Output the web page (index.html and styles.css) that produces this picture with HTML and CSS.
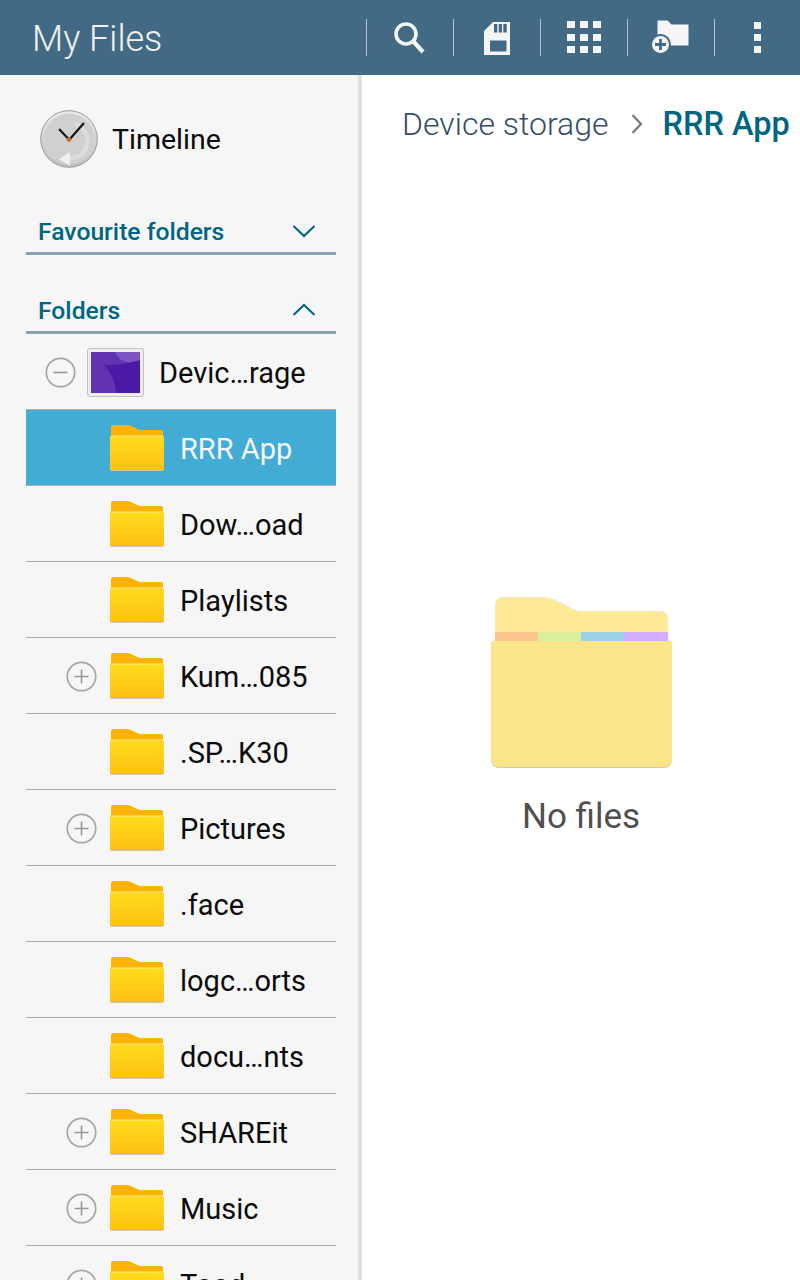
FILE: index.html
```html
<!DOCTYPE html>
<html lang="en">
<head>
    <meta charset="UTF-8">
    <meta name="viewport" content="width=device-width, initial-scale=1.0">
    <title>My Files</title>
    <link rel="stylesheet" href="styles.css">
</head>
<body>
    <svg class="defs" width="0" height="0">
        <defs>
            <linearGradient id="folderFront" x1="0" y1="0" x2="0" y2="1">
                <stop offset="0" stop-color="#ffdc1c"/>
                <stop offset="1" stop-color="#ffc115"/>
            </linearGradient>
            <symbol id="folder" viewBox="0 0 54 47">
                <path d="M1 12V2Q1 0 3 0H17Q20 0 23 2L27 4Q29 5 31 5H52Q53 5 53 7V12Z" fill="#ffb405"/>
                <path d="M0 12Q0 11 1 11H53Q54 11 54 12V44Q54 46 52 46H2Q0 46 0 44Z" fill="#c9c4b0"/>
                <path d="M0 12Q0 11 1 11H53Q54 11 54 12V44Q54 45 53 45H1Q0 45 0 44Z" fill="url(#folderFront)"/>
                <path d="M1 11H53" stroke="#ffe98a" stroke-width="1"/>
            </symbol>
            <symbol id="plus" viewBox="0 0 31 31">
                <circle cx="15.500" cy="15.500" r="14.200" fill="none" stroke="#a2a7ab" stroke-width="1.700"/>
                <path d="M8.500 15.500H22.500M15.500 8.500V22.500" stroke="#93989d" stroke-width="1.600"/>
            </symbol>
        </defs>
    </svg>

    <header class="topbar">
        <h1>My Files</h1>
        <div class="actions">
            <button>
                <svg width="34" height="34" viewBox="0 0 34 34"><circle cx="13" cy="13" r="10" fill="none" stroke="#f5f5f5" stroke-width="3.600"/><path d="M20.500 20.500L30 31" stroke="#f5f5f5" stroke-width="4.200"/></svg>
            </button>
            <button>
                <svg width="28" height="36" viewBox="0 0 28 36"><path fill="#f5f5f5" fill-rule="evenodd" d="M10 2H27V35H1V11ZM7 20.500V31.500H23.500V20.500Z"/><path fill="#426a85" d="M11 4H14.300V12.500H11ZM15.700 4H19V12.500H15.700ZM20.300 4H23.700V12.500H20.300Z"/></svg>
            </button>
            <button>
                <svg width="36" height="34" viewBox="0 0 36 34" fill="#f5f5f5">
                    <rect x="1" y="0" width="8" height="7"/><rect x="14" y="0" width="8" height="7"/><rect x="27" y="0" width="8" height="7"/>
                    <rect x="1" y="13" width="8" height="7"/><rect x="14" y="13" width="8" height="7"/><rect x="27" y="13" width="8" height="7"/>
                    <rect x="1" y="25" width="8" height="7"/><rect x="14" y="25" width="8" height="7"/><rect x="27" y="25" width="8" height="7"/>
                </svg>
            </button>
            <button>
                <svg width="38" height="36" viewBox="1.500 0 38 36"><path fill="#f5f5f5" d="M7 0.500H17L21 4.500H38V25.500H7Z"/><circle cx="10" cy="24.500" r="9.500" fill="#f5f5f5" stroke="#426a85" stroke-width="2"/><path d="M4.500 24.500H15.500M10 19V30" stroke="#426a85" stroke-width="2.800"/></svg>
            </button>
            <button>
                <svg width="8" height="32" viewBox="0 0 8 32" fill="#f5f5f5"><rect width="7" height="7" y="0"/><rect width="7" height="7" y="12"/><rect width="7" height="7" y="24"/></svg>
            </button>
        </div>
    </header>

    <div class="content">
        <aside class="sidebar">
            <div class="timeline">
                <svg width="60" height="60" viewBox="0 0 60 60">
                    <defs>
                        <linearGradient id="clockRim" x1="0" y1="0" x2="0" y2="1">
                            <stop offset="0" stop-color="#ececec"/>
                            <stop offset="1" stop-color="#bdbdbd"/>
                        </linearGradient>
                    </defs>
                    <circle cx="30" cy="30" r="28.300" fill="url(#clockRim)" stroke="#9a9a9a" stroke-width="1"/>
                    <circle cx="30" cy="30" r="25.500" fill="#d0d0d0"/>
                    <path d="M30 49Q44 49 48 37Q51 22 36 14" fill="none" stroke="#dcdcdc" stroke-width="4"/>
                    <path d="M31 43L20 50L31 57Z" fill="#efefef"/>
                    <path d="M30 30.500L20 20M30 31L45 14" stroke="#141414" stroke-width="2.200"/>
                    <circle cx="30" cy="30.500" r="2.300" fill="#d2651f"/>
                </svg>
                <span>Timeline</span>
            </div>

            <div class="section section-first">
                <span>Favourite folders</span>
                <svg width="24" height="14" viewBox="0 0 24 14"><path d="M1.500 2L12 12L22.500 2" fill="none" stroke="#00667f" stroke-width="2"/></svg>
            </div>
            <div class="section">
                <span>Folders</span>
                <svg width="24" height="14" viewBox="0 0 24 14"><path d="M1.500 12L12 2L22.500 12" fill="none" stroke="#00667f" stroke-width="2"/></svg>
            </div>

            <div class="device">
                <svg class="toggle" width="31" height="31" viewBox="0 0 31 31"><circle cx="15.500" cy="15.500" r="14.200" fill="none" stroke="#a2a7ab" stroke-width="1.700"/><path d="M8.500 15.500H22.500" stroke="#93989d" stroke-width="1.600"/></svg>
                <div class="thumb">
                    <svg width="49" height="41" viewBox="0 0 49 41">
                        <rect width="49" height="41" fill="#6232b2"/>
                        <path d="M24 0H49V9Q36 12 30 8Q26 4 24 0Z" fill="#7c55c2"/>
                        <path d="M13 13Q30 14 49 8V41H25Q24 24 13 13Z" fill="#4a1aa6"/>
                    </svg>
                </div>
                <span>Devic…rage</span>
            </div>

            <ul class="tree">
                <li class="selected"><svg class="folder"><use href="#folder"/></svg><span>RRR App</span></li>
                <li><svg class="folder"><use href="#folder"/></svg><span>Dow…oad</span></li>
                <li><svg class="folder"><use href="#folder"/></svg><span>Playlists</span></li>
                <li><svg class="plus"><use href="#plus"/></svg><svg class="folder"><use href="#folder"/></svg><span>Kum…085</span></li>
                <li><svg class="folder"><use href="#folder"/></svg><span>.SP…K30</span></li>
                <li><svg class="plus"><use href="#plus"/></svg><svg class="folder"><use href="#folder"/></svg><span>Pictures</span></li>
                <li><svg class="folder"><use href="#folder"/></svg><span>.face</span></li>
                <li><svg class="folder"><use href="#folder"/></svg><span>logc…orts</span></li>
                <li><svg class="folder"><use href="#folder"/></svg><span>docu…nts</span></li>
                <li><svg class="plus"><use href="#plus"/></svg><svg class="folder"><use href="#folder"/></svg><span>SHAREit</span></li>
                <li><svg class="plus"><use href="#plus"/></svg><svg class="folder"><use href="#folder"/></svg><span>Music</span></li>
                <li><svg class="plus"><use href="#plus"/></svg><svg class="folder"><use href="#folder"/></svg><span>Tood</span></li>
            </ul>
        </aside>

        <main class="main">
            <div class="crumbs">
                <span>Device storage</span>
                <svg width="12" height="22" viewBox="0 0 12 22"><path d="M1.500 2L10 11L1.500 20" fill="none" stroke="#74797d" stroke-width="2.200"/></svg>
                <strong>RRR App</strong>
            </div>
            <div class="empty">
                <svg width="182" height="174" viewBox="0 0 182 174">
                    <path d="M5 46V10Q5 1 14 1H52Q59 1 65 4L83 13Q87 15 92 15H169Q178 15 178 22V46Z" fill="#fde996" stroke="#f0efe6" stroke-width="1"/>
                    <rect x="5" y="36" width="43" height="10" fill="#fbc68d"/>
                    <rect x="48" y="36" width="43" height="10" fill="#d8ef9c"/>
                    <rect x="91" y="36" width="43" height="10" fill="#9bd2e9"/>
                    <rect x="134" y="36" width="44" height="10" fill="#d0aefb"/>
                    <path d="M1 49Q1 45 5 45H178Q182 45 182 49V163Q182 172 173 172H10Q1 172 1 163Z" fill="#d2cca0"/>
                    <path d="M1 49Q1 45 5 45H178Q182 45 182 49V162Q182 171 173 171H10Q1 171 1 162Z" fill="#fbe58a"/>
                </svg>
                <p>No files</p>
            </div>
        </main>
    </div>
</body>
</html>
```
FILE: styles.css
```css
html, body {
    margin: 0;
    height: 1280px;
    overflow: hidden;
}

body {
    font-family: "Roboto", sans-serif;
    background: #fff;
    color: #0b0b0b;
}

.defs {
    display: block;
    height: 0;
}

/* top bar */
.topbar {
    height: 75px;
    background: #426a85;
    display: flex;
    align-items: center;
    justify-content: space-between;
}

.topbar h1 {
    margin: 2px 0 0 32px;
    font-size: 36px;
    font-weight: 300;
    color: #f2f2f2;
}

.actions {
    display: flex;
}

.actions button {
    width: 87px;
    height: 37px;
    padding: 0;
    background: none;
    border: none;
    border-left: 1px solid #b4c2cc;
    display: flex;
    align-items: center;
    justify-content: center;
}

.actions button:last-child {
    width: 86px;
}

/* left column */
.content {
    display: flex;
    height: 1205px;
}

.sidebar {
    width: 310px;
    flex-shrink: 0;
    padding: 0 22px 0 26px;
    background: #f6f6f6;
    border-right: 4px solid #dfdfdf;
    overflow: hidden;
}

.timeline {
    display: flex;
    align-items: center;
    gap: 13px;
    height: 60px;
    margin: 34px 0 0 13px;
    font-size: 28.500px;
}

.section {
    display: flex;
    align-items: center;
    justify-content: space-between;
    height: 42px;
    margin-top: 34px;
    padding: 0 20px 0 12px;
    border-bottom: 3px solid #88a2b0;
    font-size: 24.700px;
    font-weight: 500;
    color: #00667f;
}

.section-first {
    margin-top: 41px;
}

.device {
    display: flex;
    align-items: center;
    height: 73px;
    padding: 2px 0 0 19px;
    font-size: 29px;
}

.thumb {
    width: 49px;
    height: 41px;
    margin-left: 11px;
    margin-right: 15px;
    padding: 3px;
    border: 1px solid #c2c2c2;
    border-radius: 3px;
    background: #eee;
    display: flex;
}

.tree {
    list-style: none;
    margin: 0;
    padding: 0;
    border-top: 1px solid #aeaeae;
}

.tree li {
    display: flex;
    align-items: center;
    height: 73px;
    padding: 2px 0 0 84px;
    position: relative;
    border-bottom: 1px solid #aeaeae;
    font-size: 29px;
}

.tree li.selected {
    background: #42acd5;
    color: #f3f7fa;
}

.folder {
    width: 54px;
    height: 47px;
    margin-right: 16px;
}

.plus {
    position: absolute;
    left: 40px;
    top: 23px;
    width: 31px;
    height: 31px;
}

/* right side */
.main {
    flex: 1;
    min-width: 0;
}

.crumbs {
    display: flex;
    align-items: center;
    height: 42px;
    margin-top: 28px;
    padding-left: 40px;
    font-size: 32px;
    font-weight: 300;
    color: #344d66;
    white-space: nowrap;
}

.crumbs svg {
    margin: 0 20px 0 22px;
}

.crumbs strong {
    font-size: 32.500px;
    font-weight: 500;
    color: #00667f;
}

.empty {
    display: flex;
    flex-direction: column;
    align-items: center;
    margin-top: 451px;
}

.empty p {
    margin: 26px 0 0;
    font-size: 35px;
    color: #505050;
}
```
